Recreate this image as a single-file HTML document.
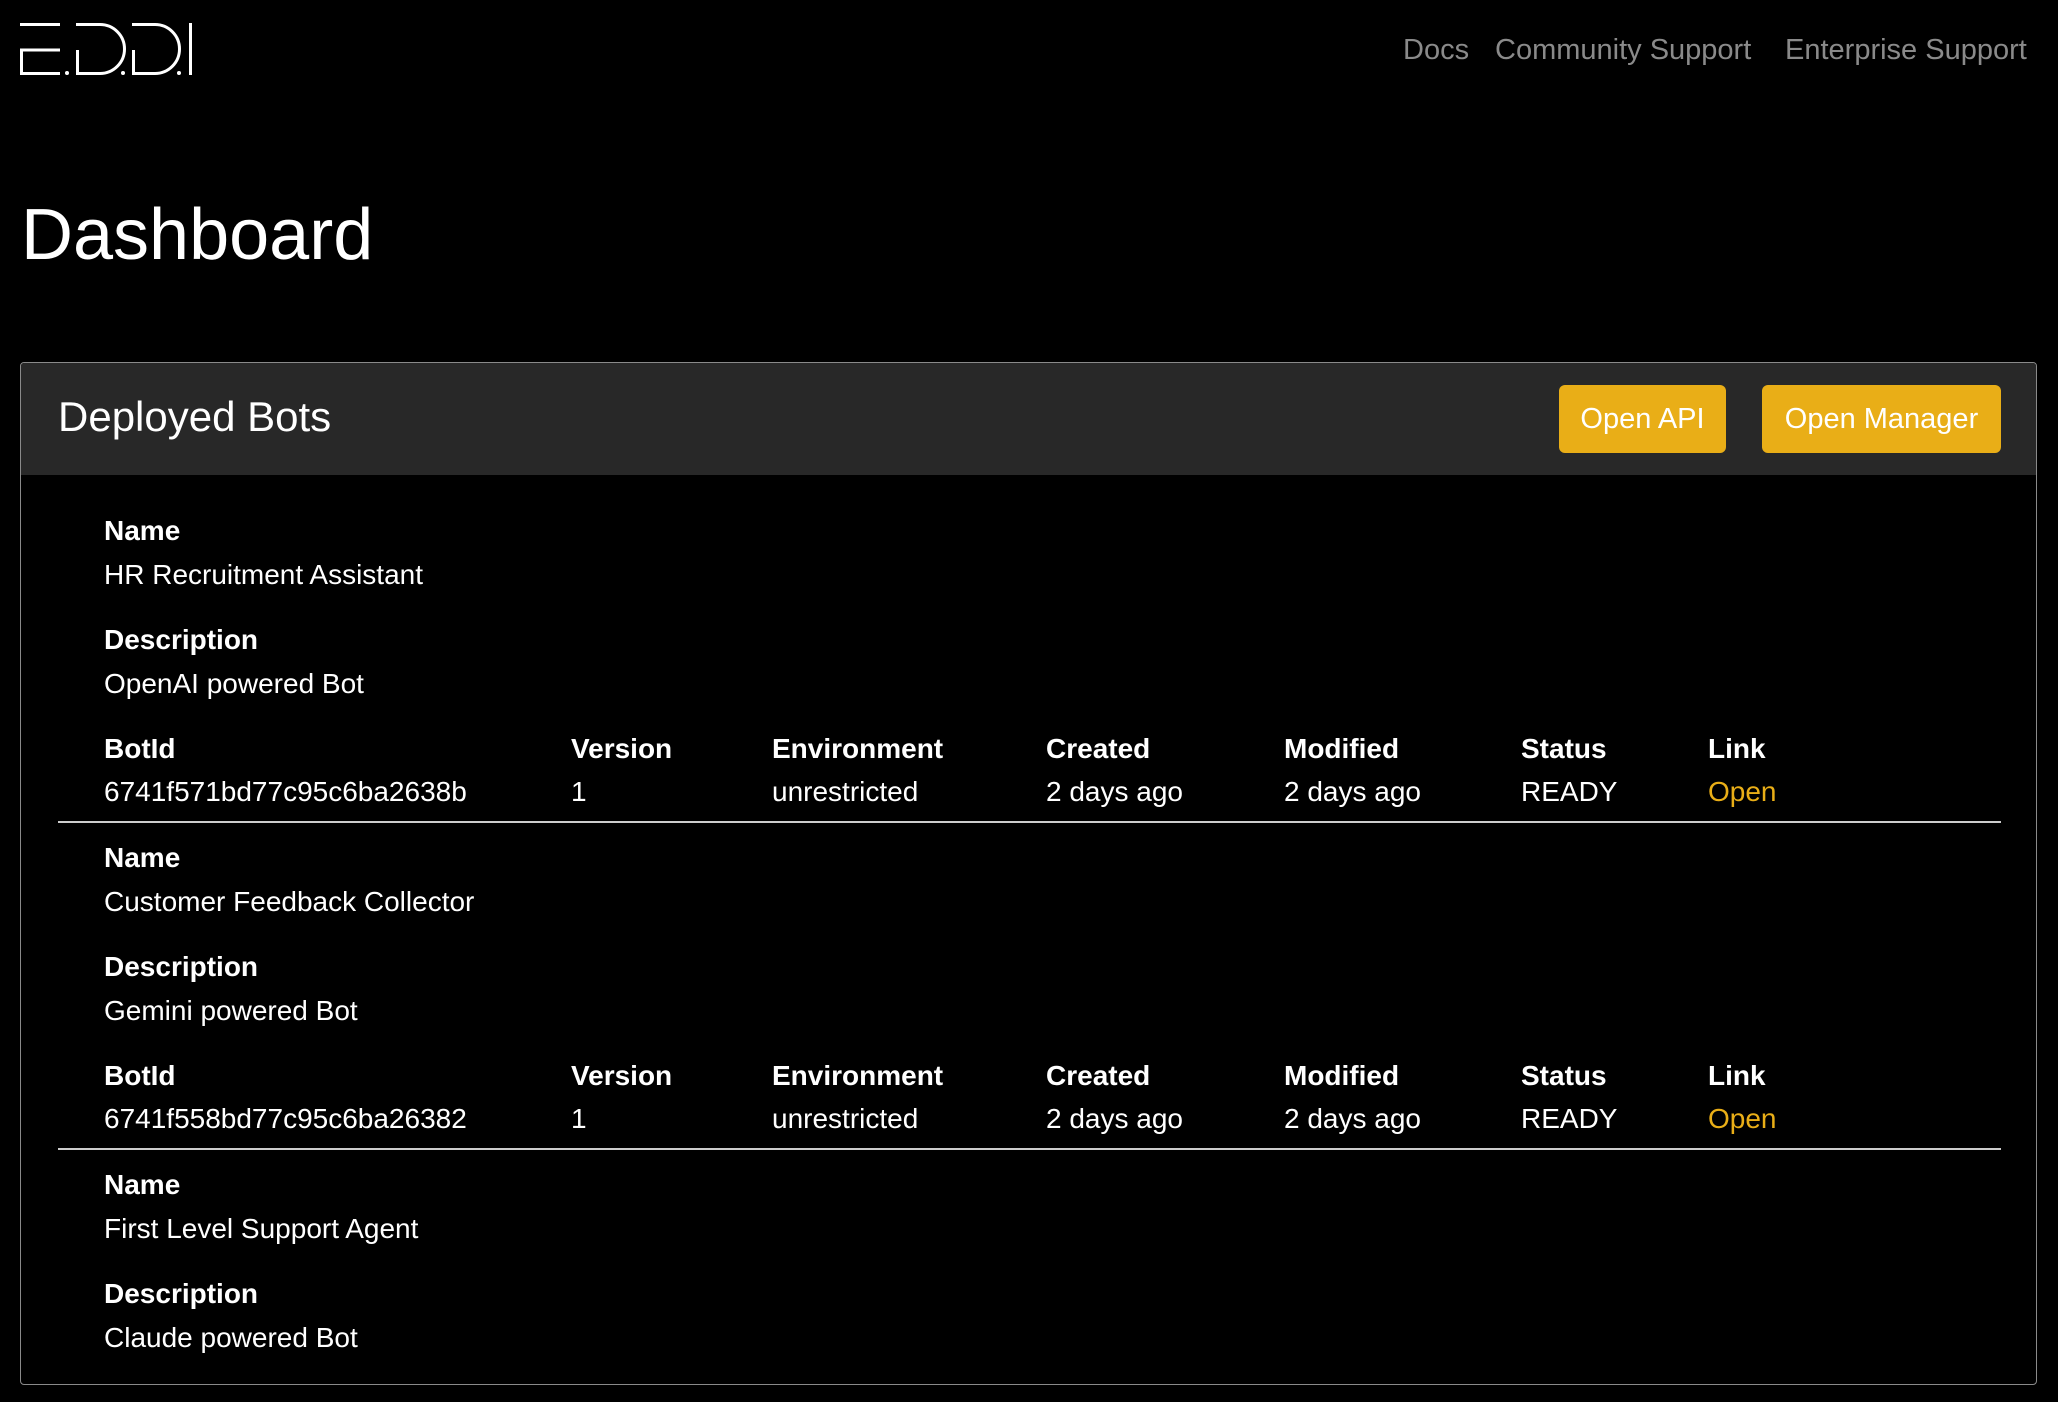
<!DOCTYPE html>
<html><head><meta charset="utf-8"><style>
*{margin:0;padding:0;box-sizing:border-box}
html,body{width:2058px;height:1402px;background:#000;overflow:hidden;font-family:"Liberation Sans",sans-serif;color:#fff}
.a{position:absolute;white-space:nowrap}
.nav{top:32px;font-size:29px;color:#8a8a8a;line-height:36px}
.card{position:absolute;left:20px;top:362px;width:2017px;height:1023px;border:1px solid #8a8a8a;border-radius:4px;overflow:hidden}
.hdr{position:absolute;left:0;top:0;right:0;height:112px;background:#282828}
.btn{position:absolute;top:22px;height:68px;background:#e9ae17;border-radius:6px;color:#fff;font-size:29px;line-height:68px;text-align:center}
.l{font-weight:bold;font-size:28px;line-height:43px}
.v{font-size:28px;line-height:43px}
.o{color:#e9ae17}
.hr{position:absolute;left:38px;width:1943px;height:2px;background:#ccc}
</style></head><body>
<svg class="a" style="left:0;top:0" width="220" height="100" viewBox="0 0 220 100" fill="none" stroke="#fff" stroke-width="3">
<path d="M20 24.5H60M60 50H21.5V73.5H60"/>
<circle cx="67" cy="73" r="2" fill="#fff" stroke="none"/>
<path d="M76 24.5H100A24.5 24.5 0 0 1 100 73.5H77.5V50"/>
<circle cx="123" cy="73" r="2" fill="#fff" stroke="none"/>
<path d="M132 24.5H155A24.5 24.5 0 0 1 155 73.5H133.5V50"/>
<circle cx="179" cy="73" r="2" fill="#fff" stroke="none"/>
<path d="M190.5 23V75"/>
</svg>
<div class="a nav" style="left:1403px">Docs</div>
<div class="a nav" style="left:1495px">Community Support</div>
<div class="a nav" style="left:1785px">Enterprise Support</div>
<div class="a" style="left:21px;top:192px;font-size:72px;line-height:86px">Dashboard</div>
<div class="card">
<div class="hdr">
<div class="a" style="left:37px;top:28px;font-size:42px;line-height:52px">Deployed Bots</div>
<div class="btn" style="left:1538px;width:167px">Open API</div>
<div class="btn" style="left:1741px;width:239px">Open Manager</div>
</div>
</div>
<div id="rows"></div>
<script>
var bots=[["HR Recruitment Assistant","OpenAI powered Bot","6741f571bd77c95c6ba2638b"],["Customer Feedback Collector","Gemini powered Bot","6741f558bd77c95c6ba26382"],["First Level Support Agent","Claude powered Bot",null]];
var cols=[[104,"BotId"],[571,"Version"],[772,"Environment"],[1046,"Created"],[1284,"Modified"],[1521,"Status"],[1708,"Link"]];
var h="";
bots.forEach(function(b,i){var o=i*327;
h+='<div class="a l" style="left:104px;top:'+(509+o)+'px">Name</div>';
h+='<div class="a v" style="left:104px;top:'+(553+o)+'px">'+b[0]+'</div>';
h+='<div class="a l" style="left:104px;top:'+(618+o)+'px">Description</div>';
h+='<div class="a v" style="left:104px;top:'+(662+o)+'px">'+b[1]+'</div>';
if(b[2]){var vals=[b[2],"1","unrestricted","2 days ago","2 days ago","READY","Open"];
cols.forEach(function(c,j){h+='<div class="a l" style="left:'+c[0]+'px;top:'+(727+o)+'px">'+c[1]+'</div>';
h+='<div class="a v'+(j==6?' o':'')+'" style="left:'+c[0]+'px;top:'+(770+o)+'px">'+vals[j]+'</div>';});
h+='<div class="hr" style="left:58px;top:'+(821+o)+'px"></div>';}
});
document.getElementById("rows").innerHTML=h;
</script>
</body></html>
